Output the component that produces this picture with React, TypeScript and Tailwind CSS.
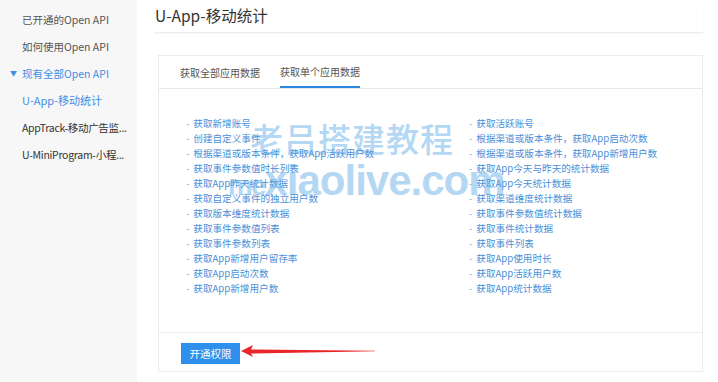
const leftItems = [
  '获取新增账号',
  '创建自定义事件',
  '根据渠道或版本条件，获取App活跃用户数',
  '获取事件参数值时长列表',
  '获取App昨天统计数据',
  '获取自定义事件的独立用户数',
  '获取版本维度统计数据',
  '获取事件参数值列表',
  '获取事件参数列表',
  '获取App新增用户留存率',
  '获取App启动次数',
  '获取App新增用户数',
];

const rightItems = [
  '获取活跃账号',
  '根据渠道或版本条件，获取App启动次数',
  '根据渠道或版本条件，获取App新增用户数',
  '获取App今天与昨天的统计数据',
  '获取App今天统计数据',
  '获取渠道维度统计数据',
  '获取事件参数值统计数据',
  '获取事件统计数据',
  '获取事件列表',
  '获取App使用时长',
  '获取App活跃用户数',
  '获取App统计数据',
];

const ApiList = ({ items, className }: { items: string[]; className: string }) => (
  <ul className={className}>
    {items.map((t) => (
      <li key={t} className="h-[15px] flex items-center text-[9.6px] text-[#4a90d9] whitespace-nowrap">
        <span className="text-[#8aa9c8] mr-[4px]">-</span>
        {t}
      </li>
    ))}
  </ul>
);

const App = () => {
  return (
    <div className="relative flex w-[718px] h-[382px] bg-white overflow-hidden font-['Noto_Sans_CJK_SC','Noto_Sans',sans-serif]">
      {/* Sidebar */}
      <div className="w-[137px] shrink-0 bg-[#f7f7f7] pt-[6px]">
        <div className="h-[27px] flex items-center pl-[22px] text-[10.5px] text-[#555]">已开通的Open API</div>
        <div className="h-[27px] flex items-center pl-[22px] text-[10.5px] text-[#555]">如何使用Open API</div>
        <div className="h-[27px] flex items-center pl-[10px] text-[10.5px] text-[#3d8ee4]">
          <span className="text-[7px] mr-[5px]">▼</span>现有全部Open API
        </div>
        <div className="h-[27px] flex items-center pl-[22px] text-[11px] text-[#3d8ee4]">U-App-移动统计</div>
        <div className="h-[27px] flex items-center pl-[22px] pr-[3px] text-[10.5px] tracking-[-0.3px] text-[#333]">
          <span className="whitespace-nowrap">AppTrack-移动广告监...</span>
        </div>
        <div className="h-[27px] flex items-center pl-[22px] pr-[3px] text-[10.5px] tracking-[-0.3px] text-[#333]">
          <span className="whitespace-nowrap">U-MiniProgram-小程...</span>
        </div>
      </div>

      {/* Main */}
      <div className="flex-1 min-w-0 pl-[18px] pr-[15px]">
        <div className="h-[33px] flex items-center border-b border-[#ececec] shadow-[0_1px_2px_rgba(0,0,0,0.04)] text-[15.5px] text-[#333]">
          U-App-移动统计
        </div>

        <div className="mt-[22px] ml-[3px] h-[317px] border border-[#ececec] flex flex-col">
          {/* Tabs */}
          <div className="h-[33px] flex items-end pl-[21px] gap-[20px] border-b border-[#e8e8e8] text-[10px]">
            <div className="h-full flex items-center text-[#555]">获取全部应用数据</div>
            <div className="h-full flex items-center text-[#555] border-b-2 border-[#2b86e0]">获取单个应用数据</div>
          </div>

          {/* Lists */}
          <div className="flex-1 flex pl-[27px] pt-[27px]">
            <ApiList items={leftItems} className="w-[283px] shrink-0" />
            <ApiList items={rightItems} className="flex-1 min-w-0" />
          </div>

          {/* Footer */}
          <div className="relative h-[39px] border-t border-[#ececec] pl-[22px] pt-[10px]">
            <button className="w-[59px] h-[21px] bg-[#2e8fec] text-white text-[10.5px] flex items-center justify-center">
              开通权限
            </button>
            <svg className="absolute left-[82px] top-[11px]" width="134" height="16" viewBox="0 0 134 16">
              <polygon points="0,7 12,1 10,5.5 134,6.8 134,7.2 10,9.5 12,13" fill="#e8262b" />
            </svg>
          </div>
        </div>
      </div>

      {/* Watermark */}
      <div className="absolute left-[250px] top-[122px] text-[33px] leading-none font-medium text-[#5aaae8] opacity-45 tracking-[1px] pointer-events-none">
        老吕搭建教程
      </div>
      <div className="absolute left-[228px] top-[160px] text-[42px] leading-none font-bold text-[#5aaae8] opacity-45 font-['Liberation_Sans',sans-serif] tracking-[-1px] pointer-events-none">
        <span className="text-[28px] tracking-[-2px]">me</span>xiaolive.com
      </div>
    </div>
  );
};

export default App;
